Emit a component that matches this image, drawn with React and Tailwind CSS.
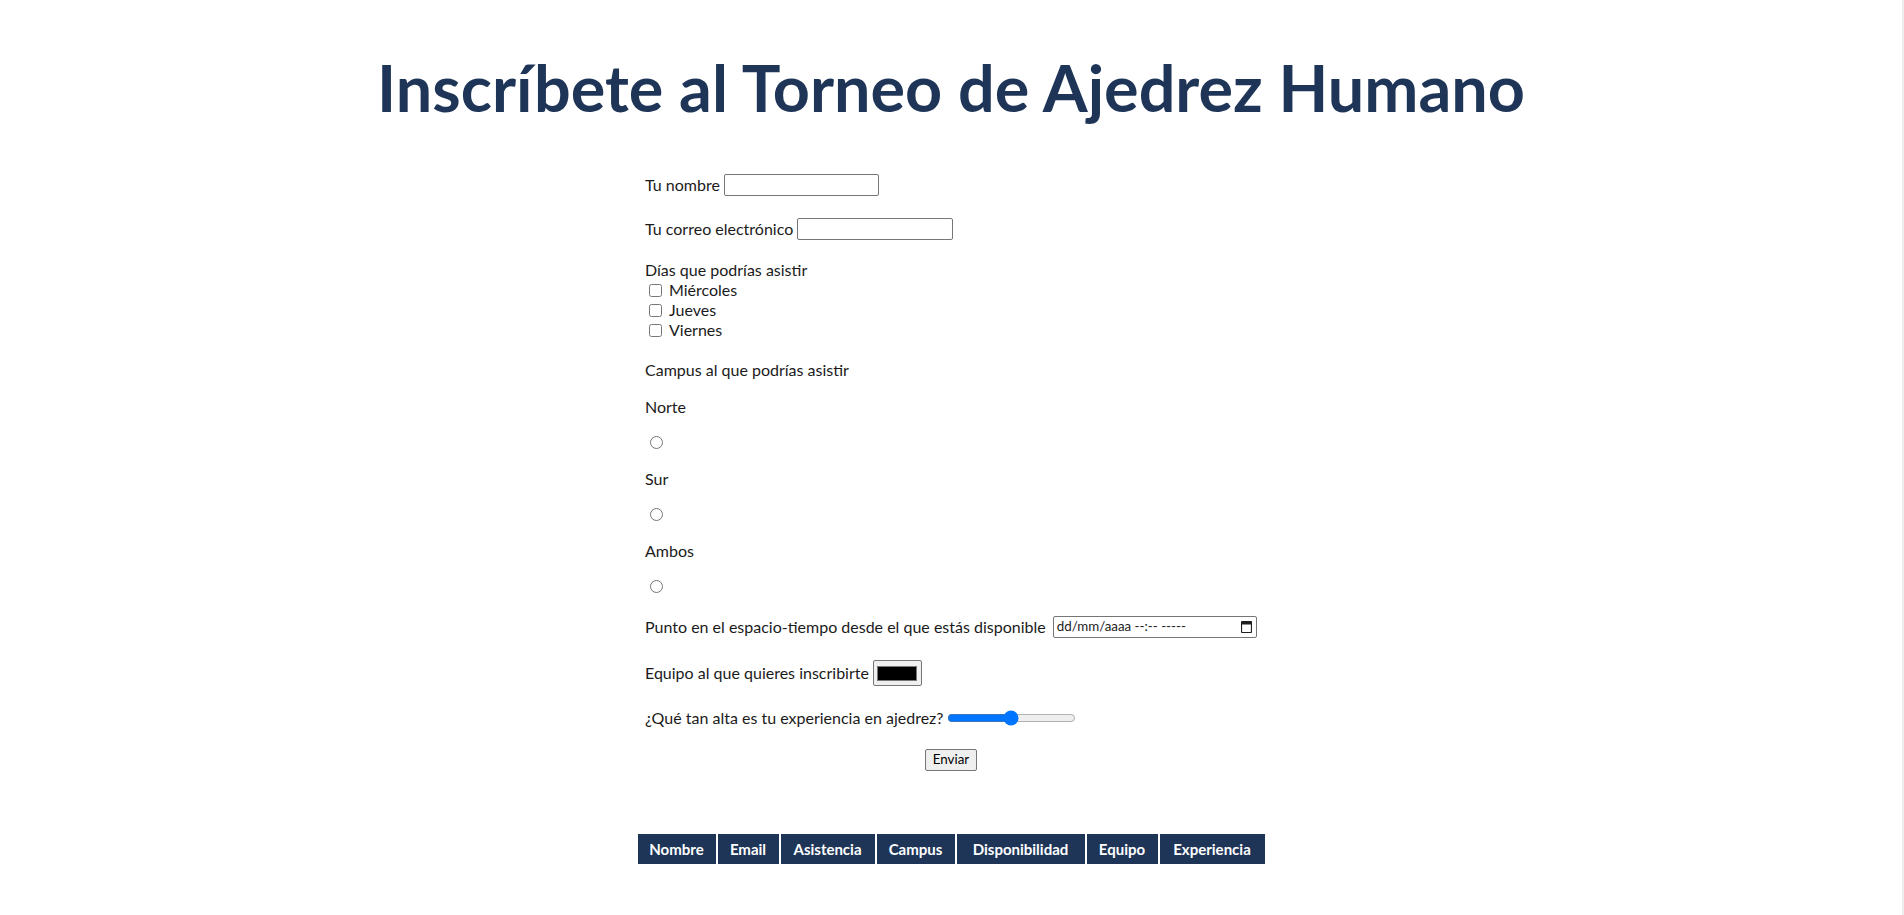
import React from "react";

const font = { fontFamily: "Lato, 'Noto Sans', sans-serif" };

const columns = [
  { name: "Nombre", w: "w-[78px]" },
  { name: "Email", w: "w-[61px]" },
  { name: "Asistencia", w: "w-[94px]" },
  { name: "Campus", w: "w-[78px]" },
  { name: "Disponibilidad", w: "w-[128px]" },
  { name: "Equipo", w: "w-[71px]" },
  { name: "Experiencia", w: "w-[105px]" },
];

const CalendarIcon = () => (
  <svg width="11" height="12" viewBox="0 0 11 12" className="shrink-0">
    <rect x="0.5" y="0.5" width="10" height="11" rx="1" fill="none" stroke="#1f1f1f" strokeWidth="1.2" />
    <rect x="0.5" y="0.5" width="10" height="3" fill="#1f1f1f" />
  </svg>
);

const App = () => {
  return (
    <div className="min-h-screen bg-white border-r-2 border-[#ededed] text-[#1b1b1b]" style={font}>
      <h1 className="pt-[47px] text-center text-[64.7px] leading-[80px] font-bold text-[#1e3557]">
        Inscríbete al Torneo de Ajedrez Humano
      </h1>

      <form className="w-[612px] mx-auto mt-[47px] text-[16px]">
        <div className="h-[22px] flex items-center">
          <label>Tu nombre</label>
          <input type="text" className="ml-[4px] w-[155px] h-[22px] border border-[#767676] rounded-[2px] px-[2px] text-[13px]" />
        </div>

        <div className="mt-[22px] h-[22px] flex items-center">
          <label>Tu correo electrónico</label>
          <input type="email" className="ml-[4px] w-[156px] h-[22px] border border-[#767676] rounded-[2px] px-[2px] text-[13px]" />
        </div>

        <div className="mt-[20px] h-[20px] flex items-center">Días que podrías asistir</div>
        {["Miércoles", "Jueves", "Viernes"].map((d) => (
          <label key={d} className="h-[20px] flex items-center">
            <input type="checkbox" className="ml-[4px] mr-[7px] w-[13px] h-[13px]" />
            {d}
          </label>
        ))}

        <div className="mt-[20px] h-[20px] flex items-center">Campus al que podrías asistir</div>
        {["Norte", "Sur", "Ambos"].map((c) => (
          <div key={c}>
            <div className="mt-[17px] h-[20px] flex items-center">{c}</div>
            <div className="mt-[15px] h-[20px] flex items-center">
              <input type="radio" name="campus" className="ml-[5px] w-[13px] h-[13px]" />
            </div>
          </div>
        ))}

        <div className="mt-[20px] h-[22px] flex items-center">
          <label>Punto en el espacio-tiempo desde el que estás disponible</label>
          <div className="ml-[7px] w-[204px] h-[22px] border border-[#767676] rounded-[2px] flex items-center justify-between pl-[3px] pr-[4px] text-[13.33px] text-[#222]">
            <span>dd/mm/aaaa --:-- -----</span>
            <CalendarIcon />
          </div>
        </div>

        <div className="mt-[22px] h-[26px] flex items-center">
          <label>Equipo al que quieres inscribirte</label>
          <div className="ml-[4px] w-[49px] h-[26px] border border-[#767676] rounded-[2px] bg-[#efefef] flex items-center justify-center">
            <div className="w-[40px] h-[15px] bg-black border border-[#777]"></div>
          </div>
        </div>

        <div className="mt-[22px] h-[20px] flex items-center">
          <label>¿Qué tan alta es tu experiencia en ajedrez?</label>
          <input type="range" min="0" max="100" defaultValue="50" className="ml-[3px] w-[129px]" />
        </div>

        <div className="mt-[21px] flex justify-center">
          <button type="button" className="h-[22px] px-[7px] border border-[#767676] rounded-[2px] bg-[#efefef] text-[13.33px] text-black">
            Enviar
          </button>
        </div>
      </form>

      <div className="mt-[61px] pb-[40px] flex justify-center">
        <table className="border-separate border-spacing-[2px]">
          <thead>
            <tr>
              {columns.map((c) => (
                <th key={c.name} className={`${c.w} h-[30px] bg-[#1e3557] text-white text-[15px] font-bold text-center p-0`}>
                  {c.name}
                </th>
              ))}
            </tr>
          </thead>
        </table>
      </div>
    </div>
  );
};

export default App;
